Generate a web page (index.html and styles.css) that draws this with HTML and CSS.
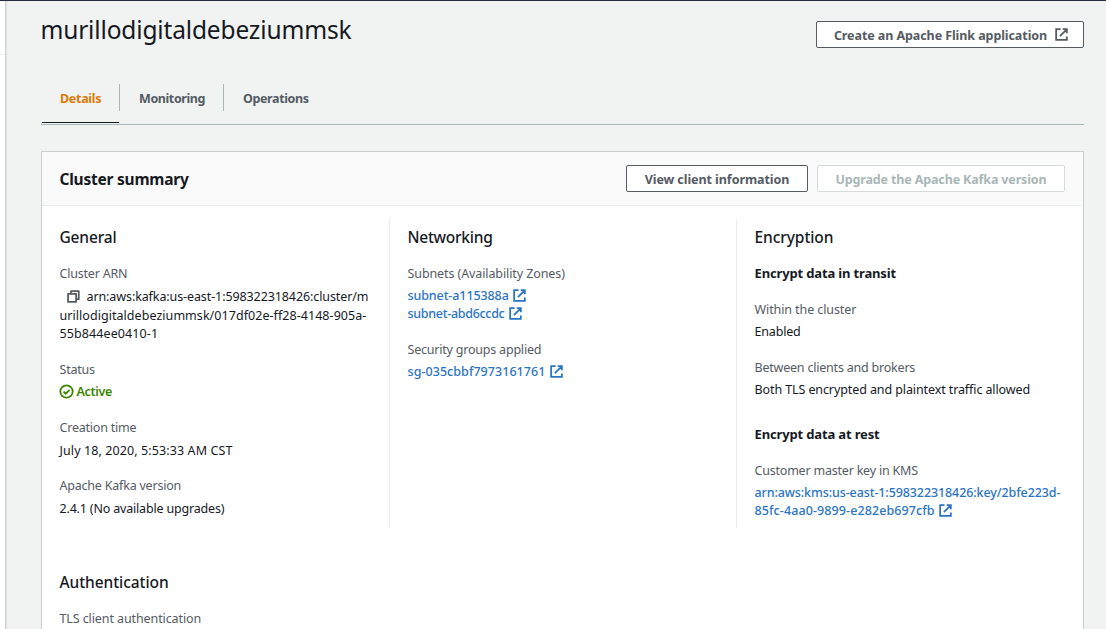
FILE: index.html
```html
<!DOCTYPE html>
<html lang="en">
<head>
<meta charset="utf-8">
<title>murillodigitaldebeziummsk</title>
<link rel="stylesheet" href="styles.css">
</head>
<body>
<svg class="defs" width="0" height="0" aria-hidden="true">
  <symbol id="external" viewBox="0 0 16 16"><path d="M7 2.3H2.3v11.4h11.4V10M9.3 2.3h4.4v4.4M13.3 2.7 6.3 9.7" fill="none" stroke="currentColor" stroke-width="1.9"/></symbol>
  <symbol id="copy" viewBox="0 0 16 16"><path d="M2.2 5.3h8.6v8.5H2.2zM5.4 5.3V2.3h8.2v8.5h-2.8" fill="none" stroke="currentColor" stroke-width="1.9" stroke-linejoin="round"/></symbol>
  <symbol id="check" viewBox="0 0 16 16"><circle cx="8" cy="8" r="6.6" fill="none" stroke="currentColor" stroke-width="1.9"/><path d="m4.8 8 2.4 2.3 4-4" fill="none" stroke="currentColor" stroke-width="1.9"/></symbol>
</svg>
<div class="shell">
  <aside class="rail"><div class="rail-head"></div></aside>
  <main class="main">
    <header class="page-head">
      <h1 class="title">murillodigitaldebeziummsk</h1>
      <a class="btn create">Create an Apache Flink application<svg class="icon"><use href="#external"/></svg></a>
    </header>
    <nav class="tabs">
      <a class="tab active">Details</a><a class="tab">Monitoring</a><a class="tab">Operations</a>
    </nav>
    <section class="card">
      <div class="card-head">
        <h2 class="card-title">Cluster summary</h2>
        <div class="actions"><a class="btn view">View client information</a><a class="btn upgrade">Upgrade the Apache Kafka version</a></div>
      </div>
      <div class="cols">
        <div class="col">
          <h3 class="heading">General</h3>
          <div class="field arn">
            <div class="label">Cluster ARN</div>
            <div class="value"><div class="arn-first"><svg class="icon copy"><use href="#copy"/></svg><span class="t2">arn:aws:kafka:us-east-1:598322318426:cluster/m</span></div><div class="w1">urillodigitaldebeziummsk/017df02e-ff28-4148-905a-</div><div class="w2">55b844ee0410-1</div></div>
          </div>
          <div class="field status">
            <div class="label">Status</div>
            <div class="value ok"><svg class="icon"><use href="#check"/></svg>Active</div>
          </div>
          <div class="field created">
            <div class="label">Creation time</div>
            <div class="value w2">July 18, 2020, 5:53:33 AM CST</div>
          </div>
          <div class="field version">
            <div class="label">Apache Kafka version</div>
            <div class="value t3">2.4.1 (No available upgrades)</div>
          </div>
        </div>
        <div class="col">
          <h3 class="heading tight">Networking</h3>
          <div class="field">
            <div class="label t2">Subnets (Availability Zones)</div>
            <div class="value link"><div class="t2">subnet-a115388a<svg class="icon"><use href="#external"/></svg></div><div class="t4">subnet-abd6ccdc<svg class="icon"><use href="#external"/></svg></div></div>
          </div>
          <div class="field">
            <div class="label">Security groups applied</div>
            <div class="value link w1">sg-035cbbf7973161761<svg class="icon"><use href="#external"/></svg></div>
          </div>
        </div>
        <div class="col">
          <h3 class="heading snug">Encryption</h3>
          <h4 class="subheading transit">Encrypt data in transit</h4>
          <div class="field">
            <div class="label t2">Within the cluster</div>
            <div class="value t3">Enabled</div>
          </div>
          <div class="field">
            <div class="label">Between clients and brokers</div>
            <div class="value t2">Both TLS encrypted and plaintext traffic allowed</div>
          </div>
          <h4 class="subheading rest">Encrypt data at rest</h4>
          <div class="field">
            <div class="label">Customer master key in KMS</div>
            <div class="value link"><div class="t2">arn:aws:kms:us-east-1:598322318426:key/2bfe223d-</div><div class="w2">85fc-4aa0-9899-e282eb697cfb<svg class="icon"><use href="#external"/></svg></div></div>
          </div>
        </div>
      </div>
      <div class="auth">
        <h3 class="heading snug">Authentication</h3>
        <div class="label t2">TLS client authentication</div>
      </div>
    </section>
  </main>
</div>
</body>
</html>
```
FILE: styles.css
```css
* { box-sizing: border-box; }
body { margin: 0; font: 12.5px/18px "Noto Sans", sans-serif; color: #16191f; background: #f1f3f3; overflow: hidden; }
.defs { position: absolute; }
h1, h2, h3, h4 { margin: 0; }

.shell { display: flex; height: 629px; border-top: 1px solid #242b43; overflow: hidden; }
.rail { flex: none; width: 6px; background: #fff; border-right: 1px solid #c9cdcd; }
.rail-head { height: 54px; border-bottom: 1px solid #eaeded; }
.main { flex: 1; padding: 0 22px 0 35px; box-shadow: inset 2px 0 2px -1px #e0e3e3; }

.page-head { display: flex; justify-content: space-between; align-items: flex-start; height: 83px; }
.title { margin: 13px 0 0 -.6px; font-size: 24.5px; line-height: 32px; font-weight: 400; letter-spacing: -.15px; }
.btn { display: flex; align-items: center; justify-content: center; height: 27px; padding-top: 2px; border: 1px solid #545b64; border-radius: 2px; background: #fff; color: #545b64; font-weight: 700; white-space: nowrap; }
.create { width: 268px; margin-top: 20px; padding-left: 3px; letter-spacing: -.08px; }
.create .icon { margin: -2px 0 0 7px; }
.view { width: 182px; letter-spacing: -.06px; }
.upgrade { width: 248px; border-color: #d5dbdb; color: #aab7b8; letter-spacing: -.14px; }
.icon { display: inline-block; width: 15px; height: 15px; vertical-align: -3px; }

.tabs { display: flex; height: 41px; border-bottom: 1px solid #aab7b8; }
.tab { height: 27px; padding: 6px 18px 0 19px; border-left: 1px solid #aab7b8; color: #545b64; font-weight: 700; letter-spacing: -.4px; }
.tab.active { width: 77px; height: 39px; margin-left: 1px; padding: 6px 0 0 18px; border-left: 0; border-bottom: 1px solid #16191f; color: #dd7a0a; letter-spacing: -.3px; }

.card { height: 500px; margin-top: 26px; border: 1px solid #c9cfcf; background: #fff; }
.card-head { display: flex; justify-content: space-between; align-items: center; height: 54px; padding: 0 18px 0 17.5px; background: #fafafa; border-bottom: 1px solid #eaeded; }
.card-title { font-size: 15.5px; line-height: 20px; letter-spacing: -.23px; }
.actions { display: flex; gap: 9px; }

.cols { display: grid; grid-template: 309px / 348px 347px 1fr; margin-top: 13px; }
.col { padding: 8px 17px 0 17.5px; border-right: 1px solid #eaeded; white-space: nowrap; }
.col:last-child { border-right: 0; }
.heading { margin-bottom: 18px; font-size: 15.5px; line-height: 20px; font-weight: 500; letter-spacing: -.16px; }
.tight { letter-spacing: -.26px; }
.snug { letter-spacing: -.07px; }
.subheading { margin-bottom: 19px; font-size: 13px; line-height: 18px; letter-spacing: -.15px; }
.transit { margin-top: -1px; }
.rest { margin-top: 26px; }
.field { margin-bottom: 18px; }
.label { color: #545b64; letter-spacing: -.21px; }
.value { margin-top: 4px; }
.link { color: #2a74c5; font-weight: 500; }
.link .icon { margin-left: 3.5px; }
.ok { display: flex; align-items: center; gap: 3px; margin-left: -1px; color: #3a8500; font-weight: 600; letter-spacing: -.35px; }
.ok .icon { margin-bottom: 2px; }
.arn .value, .created .value, .version .value { margin-top: 5px; }
.created { margin-bottom: 17px; }
.arn-first { display: flex; align-items: center; height: 19px; margin-top: -1px; padding-left: 6px; }
.arn-first .icon { margin-right: 6px; color: #545b64; }
.arn .w1 { margin-top: 1px; }
.arn { margin-bottom: 18px; }
.t2 { letter-spacing: -.1px; }
.t3 { letter-spacing: -.18px; }
.t4 { letter-spacing: -.3px; }
.w1 { letter-spacing: .05px; }
.w2 { letter-spacing: .1px; }

.auth { padding: 44px 17.5px 0; }
```
